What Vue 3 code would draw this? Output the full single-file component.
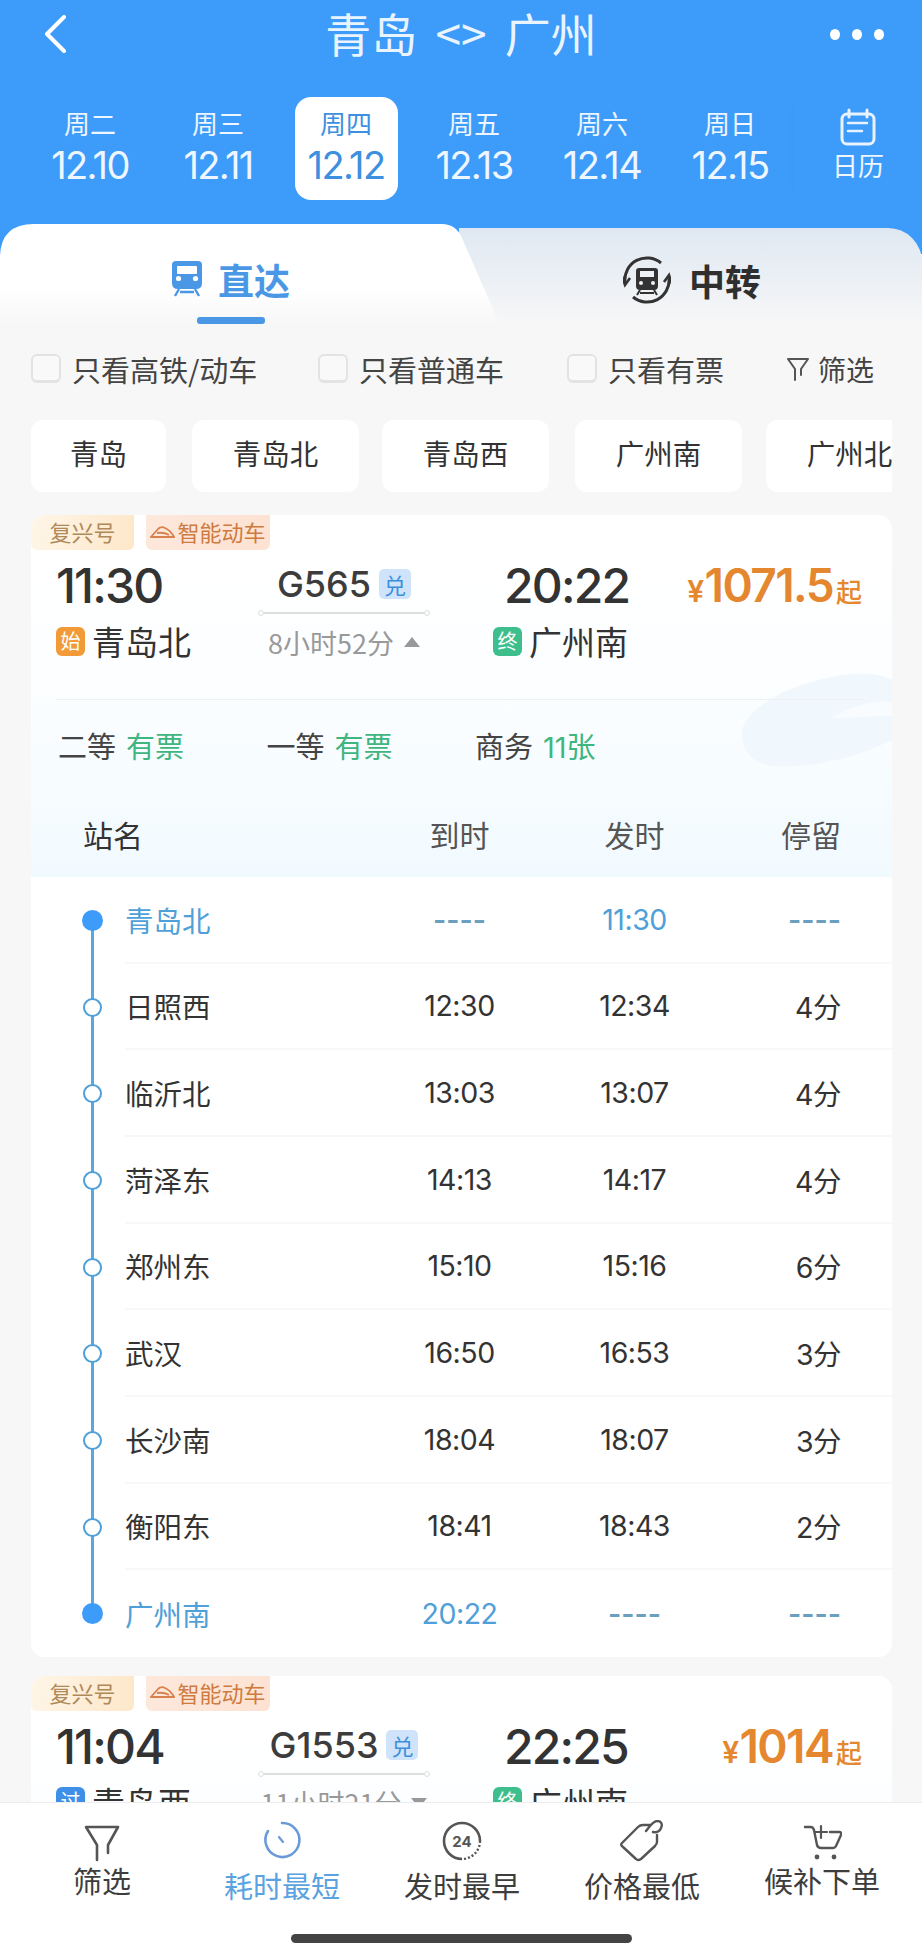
<script setup>
const days = [
  { week: '周二', date: '12.10' },
  { week: '周三', date: '12.11' },
  { week: '周四', date: '12.12', active: true },
  { week: '周五', date: '12.13' },
  { week: '周六', date: '12.14' },
  { week: '周日', date: '12.15' }
]

const filters = ['只看高铁/动车', '只看普通车', '只看有票']
const chips = ['青岛', '青岛北', '青岛西', '广州南', '广州北']

const seats = [
  { name: '二等', left: '有票' },
  { name: '一等', left: '有票' },
  { name: '商务', left: '11张' }
]

const stops = [
  { name: '青岛北', arrive: '----', depart: '11:30', stay: '----', end: true },
  { name: '日照西', arrive: '12:30', depart: '12:34', stay: '4分' },
  { name: '临沂北', arrive: '13:03', depart: '13:07', stay: '4分' },
  { name: '菏泽东', arrive: '14:13', depart: '14:17', stay: '4分' },
  { name: '郑州东', arrive: '15:10', depart: '15:16', stay: '6分' },
  { name: '武汉', arrive: '16:50', depart: '16:53', stay: '3分' },
  { name: '长沙南', arrive: '18:04', depart: '18:07', stay: '3分' },
  { name: '衡阳东', arrive: '18:41', depart: '18:43', stay: '2分' },
  { name: '广州南', arrive: '20:22', depart: '----', stay: '----', end: true }
]

const trains = [
  {
    id: 'G565', depart: '11:30', arrive: '20:22', price: '1071.5', from: '青岛北', to: '广州南',
    fromTag: '始', fromClass: 'tag-start', duration: '8小时52分', open: true
  },
  {
    id: 'G1553', depart: '11:04', arrive: '22:25', price: '1014', from: '青岛西', to: '广州南',
    fromTag: '过', fromClass: 'tag-pass', duration: '11小时21分', open: false
  }
]

const bottomTabs = ['筛选', '耗时最短', '发时最早', '价格最低', '候补下单']

const isDash = (v) => v === '----'
</script>

<template>
  <div class="page">
    <header class="top">
      <div class="nav">
        <svg class="back" width="26" height="38" viewBox="0 0 26 38">
          <path d="M22 2 L5 19 L22 36" fill="none" stroke="#fff" stroke-width="4" stroke-linecap="round" stroke-linejoin="round" />
        </svg>
        <div class="title">青岛 &lt;&gt; 广州</div>
        <div class="dots"><i></i><i></i><i></i></div>
      </div>
      <div class="days">
        <div v-for="d in days" :key="d.date" class="day" :class="{ active: d.active }">
          <div class="week">{{ d.week }}</div>
          <div class="date">{{ d.date }}</div>
        </div>
        <div class="calendar">
          <svg width="36" height="38" viewBox="0 0 36 38">
            <rect x="2" y="6" width="32" height="30" rx="5" fill="none" stroke="#e8f3ff" stroke-width="3" />
            <path d="M9 2 V9 M27 2 V9" stroke="#e8f3ff" stroke-width="3" stroke-linecap="round" />
            <path d="M8 15 H27 M8 23 H22" stroke="#e8f3ff" stroke-width="2.6" stroke-linecap="round" />
          </svg>
          <span>日历</span>
        </div>
      </div>
    </header>

    <div class="tabs">
      <div class="tab tab-direct">
        <svg width="30" height="36" viewBox="0 0 30 36">
          <path d="M4 0 H26 Q30 0 30 4 V22 Q30 28 24 28 H6 Q0 28 0 22 V4 Q0 0 4 0 Z" fill="#4a97e6" />
          <rect x="5" y="5" width="20" height="8" rx="1" fill="#fff" />
          <circle cx="6.5" cy="17.5" r="2.6" fill="#fff" />
          <circle cx="23.5" cy="17.5" r="2.6" fill="#fff" />
          <path d="M7 28 L3 35 M23 28 L27 35 M8 31 H22" stroke="#4a97e6" stroke-width="2.4" fill="none" />
        </svg>
        <span>直达</span>
        <i class="tab-line"></i>
      </div>
      <div class="tab tab-transfer">
        <svg width="48" height="48" viewBox="0 0 48 48">
          <path d="M2 26 A22 22 0 0 1 38 7 M46 22 A22 22 0 0 1 10 41" fill="none" stroke="#333" stroke-width="3" />
          <path d="M-1 20 L2 29 L7 22 M49 28 L46 19 L41 26" fill="none" stroke="#333" stroke-width="2.6" />
          <path d="M16 12 H32 Q35 12 35 15 V30 Q35 34 31 34 H17 Q13 34 13 30 V15 Q13 12 16 12 Z" fill="#333" />
          <rect x="17" y="15" width="14" height="6" fill="#eef2f6" />
          <circle cx="18" cy="27" r="2" fill="#eef2f6" />
          <circle cx="30" cy="27" r="2" fill="#eef2f6" />
          <path d="M17 34 L14 39 M31 34 L34 39 M17 37 H31" stroke="#333" stroke-width="2" fill="none" />
        </svg>
        <span>中转</span>
      </div>
    </div>

    <main class="content">
      <div class="filters">
        <label v-for="f in filters" :key="f" class="check">
          <i class="box"></i>
          <span>{{ f }}</span>
        </label>
        <div class="filter-btn">
          <svg width="24" height="26" viewBox="0 0 24 26">
            <path d="M2 3 H22 L15 13 V19 M9 24 V13 L2 3" fill="none" stroke="#555" stroke-width="2" stroke-linejoin="round" stroke-linecap="round" />
          </svg>
          <span>筛选</span>
        </div>
      </div>

      <div class="chips">
        <div v-for="c in chips" :key="c" class="chip" :class="{ short: c === '青岛' }">{{ c }}</div>
      </div>

      <section v-for="t in trains" :key="t.id" class="card">
        <div class="card-top">
          <svg class="swoosh" width="152" height="100" viewBox="0 0 152 100">
            <path d="M2 58 C10 30 60 8 110 2 C130 0 145 4 152 8 V68 C120 84 70 98 30 94 C10 90 0 76 2 58 Z" fill="#f1f8fd" />
            <path d="M92 46 C110 34 135 28 152 30 V44 C130 44 110 46 92 46 Z" fill="#f8fcff" />
          </svg>
          <div class="badges">
            <span class="badge badge-fx">复兴号</span>
            <span class="badge badge-ai">
              <svg width="25" height="13" viewBox="0 0 25 13">
                <path d="M1 12 L8 4 Q11 1 15 3 Q21 6 24 12 Z M7 8 Q14 7 19 10" fill="none" stroke="#d9814a" stroke-width="1.8" />
              </svg>
              智能动车
            </span>
          </div>

          <div class="ticket">
            <div>
              <div class="time">{{ t.depart }}</div>
              <div class="station"><i class="tag" :class="t.fromClass">{{ t.fromTag }}</i>{{ t.from }}</div>
            </div>
            <div class="middle">
              <div class="train-no">{{ t.id }}<i class="redeem">兑</i></div>
              <div class="track"></div>
              <div class="duration">
                {{ t.duration }}
                <i class="arrow" :class="{ down: !t.open }"></i>
              </div>
            </div>
            <div class="arrive-col">
              <div class="time">{{ t.arrive }}</div>
              <div class="station"><i class="tag tag-end">终</i>{{ t.to }}</div>
            </div>
            <div class="price"><small>¥</small>{{ t.price }}<em>起</em></div>
          </div>

          <template v-if="t.open">
            <div class="divider"></div>
            <div class="seats">
              <div v-for="s in seats" :key="s.name" class="seat">
                {{ s.name }}<span>{{ s.left }}</span>
              </div>
            </div>
            <div class="stop-head">
              <div class="cells">
                <div class="head-name">站名</div>
                <div>到时</div>
                <div>发时</div>
                <div class="stay">停留</div>
              </div>
            </div>
          </template>
        </div>

        <div v-if="t.open" class="stops">
          <i class="rail"></i>
          <div v-for="s in stops" :key="s.name + s.arrive" class="stop" :class="{ end: s.end }">
            <i class="dot"></i>
            <div class="cells">
              <div class="stop-name">{{ s.name }}</div>
              <div :class="{ dash: isDash(s.arrive) }">{{ s.arrive }}</div>
              <div :class="{ dash: isDash(s.depart) }">{{ s.depart }}</div>
              <div class="stay" :class="{ dash: isDash(s.stay) }">{{ s.stay }}</div>
            </div>
          </div>
        </div>
      </section>
    </main>

    <footer class="bottom">
      <div class="bottom-tabs">
        <div class="bottom-tab">
          <svg width="40" height="42" viewBox="0 0 40 42">
            <path d="M15 40 V25 L4 7 H36 L26 25 V33" fill="none" stroke="#555" stroke-width="2.6" stroke-linecap="round" stroke-linejoin="round" />
          </svg>
          <span>{{ bottomTabs[0] }}</span>
        </div>
        <div class="bottom-tab low current">
          <svg width="40" height="42" viewBox="0 0 40 42">
            <path d="M20 3 A17 17 0 1 1 6 11" fill="none" stroke="#6a9bd8" stroke-width="2.6" stroke-linecap="round" />
            <path d="M17 17 L21 22" stroke="#6a9bd8" stroke-width="2.2" stroke-linecap="round" />
          </svg>
          <span>{{ bottomTabs[1] }}</span>
        </div>
        <div class="bottom-tab low">
          <svg width="40" height="42" viewBox="0 0 40 42">
            <path d="M20 39 A18 18 0 1 1 38 21" fill="none" stroke="#555" stroke-width="2.6" />
            <path d="M38 21 A18 18 0 0 1 20 39" fill="none" stroke="#555" stroke-width="2.4" stroke-dasharray="2 2" />
            <text x="20" y="27" text-anchor="middle" class="icon-num">24</text>
          </svg>
          <span>{{ bottomTabs[2] }}</span>
        </div>
        <div class="bottom-tab low">
          <svg width="44" height="42" viewBox="0 0 44 42">
            <path d="M30 5 H23 Q20 5 18 7 L2 23 Q0 25 3 27 L16 39 Q18 41 21 39 L35 26 Q37 24 37 22 V15" fill="none" stroke="#555" stroke-width="2.4" stroke-linejoin="round" stroke-linecap="round" />
            <path d="M26 11 C30 6 33 1 37 1 C41 1 43 4 41 8 C40 11 37 13 33 12" fill="none" stroke="#555" stroke-width="2.4" stroke-linecap="round" />
          </svg>
          <span>{{ bottomTabs[3] }}</span>
        </div>
        <div class="bottom-tab">
          <svg width="40" height="42" viewBox="0 0 40 42">
            <path d="M3 7 H9 Q11 7 12 10 L15 25 Q16 28 19 28 H31 Q33 28 34 26 L39 15 Q40 12 37 12 H28" fill="none" stroke="#555" stroke-width="2.4" stroke-linecap="round" />
            <path d="M19 6 V18 M13 12 H25" stroke="#555" stroke-width="2.2" stroke-linecap="round" />
            <circle cx="15" cy="37" r="2.4" fill="#555" />
            <circle cx="32" cy="37" r="2.4" fill="#555" />
          </svg>
          <span>{{ bottomTabs[4] }}</span>
        </div>
      </div>
      <div class="home-bar"></div>
    </footer>
  </div>
</template>

<style>
html, body { margin: 0; padding: 0; background: #f7f7f7; }
</style>

<style scoped>
.page { width: 922px; height: 1957px; display: flex; flex-direction: column; overflow: hidden; background: #f7f7f7; font-family: "Noto Sans CJK SC", "Noto Sans", sans-serif; color: #333; }
i, em { font-style: normal; }

/* header */
.top { height: 224px; background: #3d9bf9; color: #fff; flex: none; }
.nav { height: 97px; display: flex; justify-content: space-between; padding: 0 38px 0 42px; position: relative; }
.back { margin-top: 15px; }
.title { position: absolute; left: 0; right: 0; top: 2px; text-align: center; font-size: 46px; line-height: 60px; word-spacing: 8px; color: #eaf4ff; white-space: nowrap; }
.dots { display: flex; gap: 12px; margin-top: 29px; }
.dots i { width: 10px; height: 11px; background: #fff; border-radius: 50%; }
.days { display: grid; grid-template-columns: repeat(7, 128px); padding-left: 26px; }
.day { width: 103px; height: 103px; justify-self: center; padding-top: 8px; box-sizing: border-box; text-align: center; border-radius: 16px; color: #eef6ff; }
.day.active { background: #fff; color: #3d8fe0; }
.week { font-size: 26px; line-height: 36px; }
.date { font-family: Inter, sans-serif; font-size: 38px; line-height: 42px; margin-top: 3px; letter-spacing: -1.6px; white-space: nowrap; }
.calendar { display: flex; flex-direction: column; align-items: center; height: 103px; padding-top: 11px; box-sizing: border-box; color: #eef6ff; font-size: 26px; box-shadow: -6px 0 8px -7px rgba(0, 0, 0, .03); }
.calendar span { line-height: 36px; margin-top: 1px; }

/* tabs */
.tabs { height: 101px; flex: none; display: flex; background: linear-gradient(#3d9bf9 0, #3d9bf9 30px, #f7f7f7 30px); }
.tab { display: flex; align-items: center; font-size: 36px; position: relative; box-sizing: border-box; }
.tab-direct { width: 500px; padding: 9px 0 0 172px; gap: 16px; color: #4a97e6; font-weight: 700; z-index: 1; background: linear-gradient(#fff 65%, #f7f7f7); clip-path: path('M0 34 Q0 0 34 0 H442 Q456 0 462 14 L500 101 H0 Z'); }
.tab-line { position: absolute; left: 197px; top: 93px; width: 68px; height: 7px; border-radius: 3px; background: #4a97e6; }
.tab-transfer { flex: 1; margin: 4px 0 0 -41px; padding: 6px 0 0 164px; gap: 18px; color: #2f2f2f; font-weight: 700; border-radius: 0 34px 0 0; background: linear-gradient(#dfe8f2, #f7f7f7); }

/* filters */
.content { flex: 1; min-height: 0; overflow: hidden; padding: 0 30px 0 31px; }
.filters { height: 95px; display: grid; grid-template-columns: 287px 249px 219px 1fr; align-items: center; font-size: 29px; color: #444; padding-bottom: 8px; box-sizing: border-box; }
.check { display: flex; align-items: center; gap: 11px; white-space: nowrap; }
.box { width: 30px; height: 29px; flex: none; box-sizing: border-box; border: 2px solid #e3e3e3; border-bottom-width: 3px; border-radius: 6px; background: #f9f9f9; }
.filter-btn { display: flex; align-items: center; gap: 8px; font-size: 28px; }

.chips { display: flex; gap: 24px; height: 72px; overflow: hidden; }
.chip { width: 167px; flex: none; background: #fff; border-radius: 12px; font-size: 28.5px; line-height: 66px; text-align: center; }
.chip:nth-child(odd) { margin-right: 2px; }
.chip:nth-child(2) { margin-right: -1px; }
.chip.short { width: 135px; }

/* train card */
.card { margin-top: 23px; background: #fff; border-radius: 14px; overflow: hidden; }
.card + .card { margin-top: 19px; }
.card-top { position: relative; background: linear-gradient(#fff 40px, #fcfeff 170px, #f1faff 362px); }
.swoosh { position: absolute; right: 0; top: 157px; }
.badges { display: flex; gap: 12px; height: 35px; position: relative; }
.badge { display: flex; align-items: center; justify-content: center; gap: 2px; height: 35px; padding-bottom: 3px; box-sizing: border-box; font-size: 22px; border-radius: 0 0 6px 6px; }
.badge-fx { width: 103px; color: #b0895a; background: linear-gradient(100deg, #fff6e8, #fde7c9); border-radius: 8px 0 6px 6px; }
.badge-ai { width: 124px; color: #cf7a3e; background: linear-gradient(100deg, #fde8dc, #fde2d2); }

.ticket { position: relative; display: grid; grid-template-columns: 202px 235px 152px 1fr; padding: 12px 30px 0 25px; }
.time { font-family: Inter, sans-serif; font-size: 48px; line-height: 48px; font-weight: 500; letter-spacing: -1.8px; color: #333; }
.arrive-col .time { padding-left: 11px; }
.station { display: flex; align-items: center; gap: 7px; margin-top: 14px; height: 34px; font-size: 33px; line-height: 34px; color: #333; white-space: nowrap; }
.tag { width: 29px; height: 29px; flex: none; border-radius: 6px; color: #fff; font-size: 20px; line-height: 28px; text-align: center; }
.tag-start { background: #f29a38; }
.tag-pass { background: #3d8fe8; }
.tag-end { background: #3cbf8c; }
.train-no { display: flex; align-items: center; justify-content: center; gap: 8px; width: 172px; height: 44px; font-family: Inter, sans-serif; font-size: 36px; font-weight: 500; color: #3c3c3c; }
.redeem { width: 32px; height: 30px; border-radius: 5px; background: #cfe4fb; color: #3d8fdc; font-family: "Noto Sans CJK SC", sans-serif; font-size: 22px; font-weight: 400; line-height: 30px; text-align: center; }
.track { margin-top: 6px; height: 2px; background: #dedede; width: 172px; position: relative; }
.track::before, .track::after { content: ""; position: absolute; top: -2px; width: 6px; height: 6px; border-radius: 50%; border: 1px solid #dedede; background: #fff; box-sizing: border-box; }
.track::before { left: 0; }
.track::after { right: 0; }
.duration { display: flex; align-items: center; justify-content: center; gap: 10px; margin-top: 10px; height: 36px; width: 172px; font-size: 27px; color: #999; white-space: nowrap; }
.arrow { width: 0; height: 0; flex: none; border-left: 8px solid transparent; border-right: 8px solid transparent; border-bottom: 10px solid #999; }
.arrow.down { border-bottom: none; border-top: 10px solid #999; }
.price { justify-self: end; display: flex; align-items: baseline; height: 48px; font-family: Inter, sans-serif; font-size: 46px; line-height: 46px; font-weight: 600; letter-spacing: -1.6px; color: #e4872f; white-space: nowrap; }
.price small { font-size: 30px; font-weight: 600; margin-right: 2px; }
.price em { font-family: "Noto Sans CJK SC", sans-serif; font-size: 26px; font-weight: 500; letter-spacing: 0; margin-left: 3px; }

.divider { position: relative; margin: 39px 28px 0 25px; height: 1px; background: #edf2f5; }
.seats { position: relative; display: grid; grid-template-columns: repeat(3, 208.5px); height: 70px; padding: 20px 0 0 27px; box-sizing: border-box; align-items: center; font-size: 29px; color: #444; }
.seat span { margin-left: 10px; color: #3fb57f; font-family: Inter, "Noto Sans CJK SC", sans-serif; }

/* stop table */
.cells { flex: 1; display: grid; grid-template-columns: 247px 175px 175px 1fr; align-items: center; text-align: center; font-size: 28.5px; }
.stay { text-align: right; padding-right: 51px; }
.stop-head { position: relative; height: 107px; padding: 20px 0 0 94px; box-sizing: border-box; display: flex; color: #555; }
.stop-head .cells { font-size: 30px; }
.head-name { margin-left: -42px; text-align: left; color: #333; }
.stops { position: relative; background: #fff; }
.rail { position: absolute; left: 60px; top: 43px; bottom: 43px; width: 3px; background: #5aa7e0; }
.stop { position: relative; display: flex; height: 86.67px; padding-left: 94px; box-sizing: border-box; }
.stop .cells { border-bottom: 2px solid #f7f8f9; font-family: Inter, "Noto Sans CJK SC", sans-serif; letter-spacing: -.5px; }
.stop:last-child .cells { border-bottom: none; }
.stop-name { text-align: left; font-family: "Noto Sans CJK SC", sans-serif; letter-spacing: 0; }
.dot { position: absolute; left: 52px; top: 34px; width: 19px; height: 19px; box-sizing: border-box; border: 2px solid #4f9fd8; border-radius: 50%; background: #fff; }
.stop.end .dot { left: 51px; top: 33px; width: 21px; height: 21px; border: none; background: #3d9bf9; }
.stop.end .cells { color: #4f9fd8; }
.stop .cells .dash { color: #6a9fc0; font-weight: 600; letter-spacing: 0; }

/* bottom bar */
.bottom { height: 155px; flex: none; background: #fff; border-top: 1px solid #ececec; box-sizing: border-box; display: flex; flex-direction: column; }
.bottom-tabs { height: 131px; display: grid; grid-template-columns: repeat(5, 180px); padding-left: 12px; }
.bottom-tab { display: flex; flex-direction: column; align-items: center; padding-top: 17px; font-size: 29px; line-height: 36px; color: #3d3d3d; }
.bottom-tab.low span { margin-top: 5px; }
.bottom-tab.current { color: #5aa2e0; }
.icon-num { font-family: Inter, sans-serif; font-size: 15px; font-weight: 700; fill: #555; }
.home-bar { width: 341px; height: 9px; margin: 0 auto; border-radius: 5px; background: #444; }
</style>
